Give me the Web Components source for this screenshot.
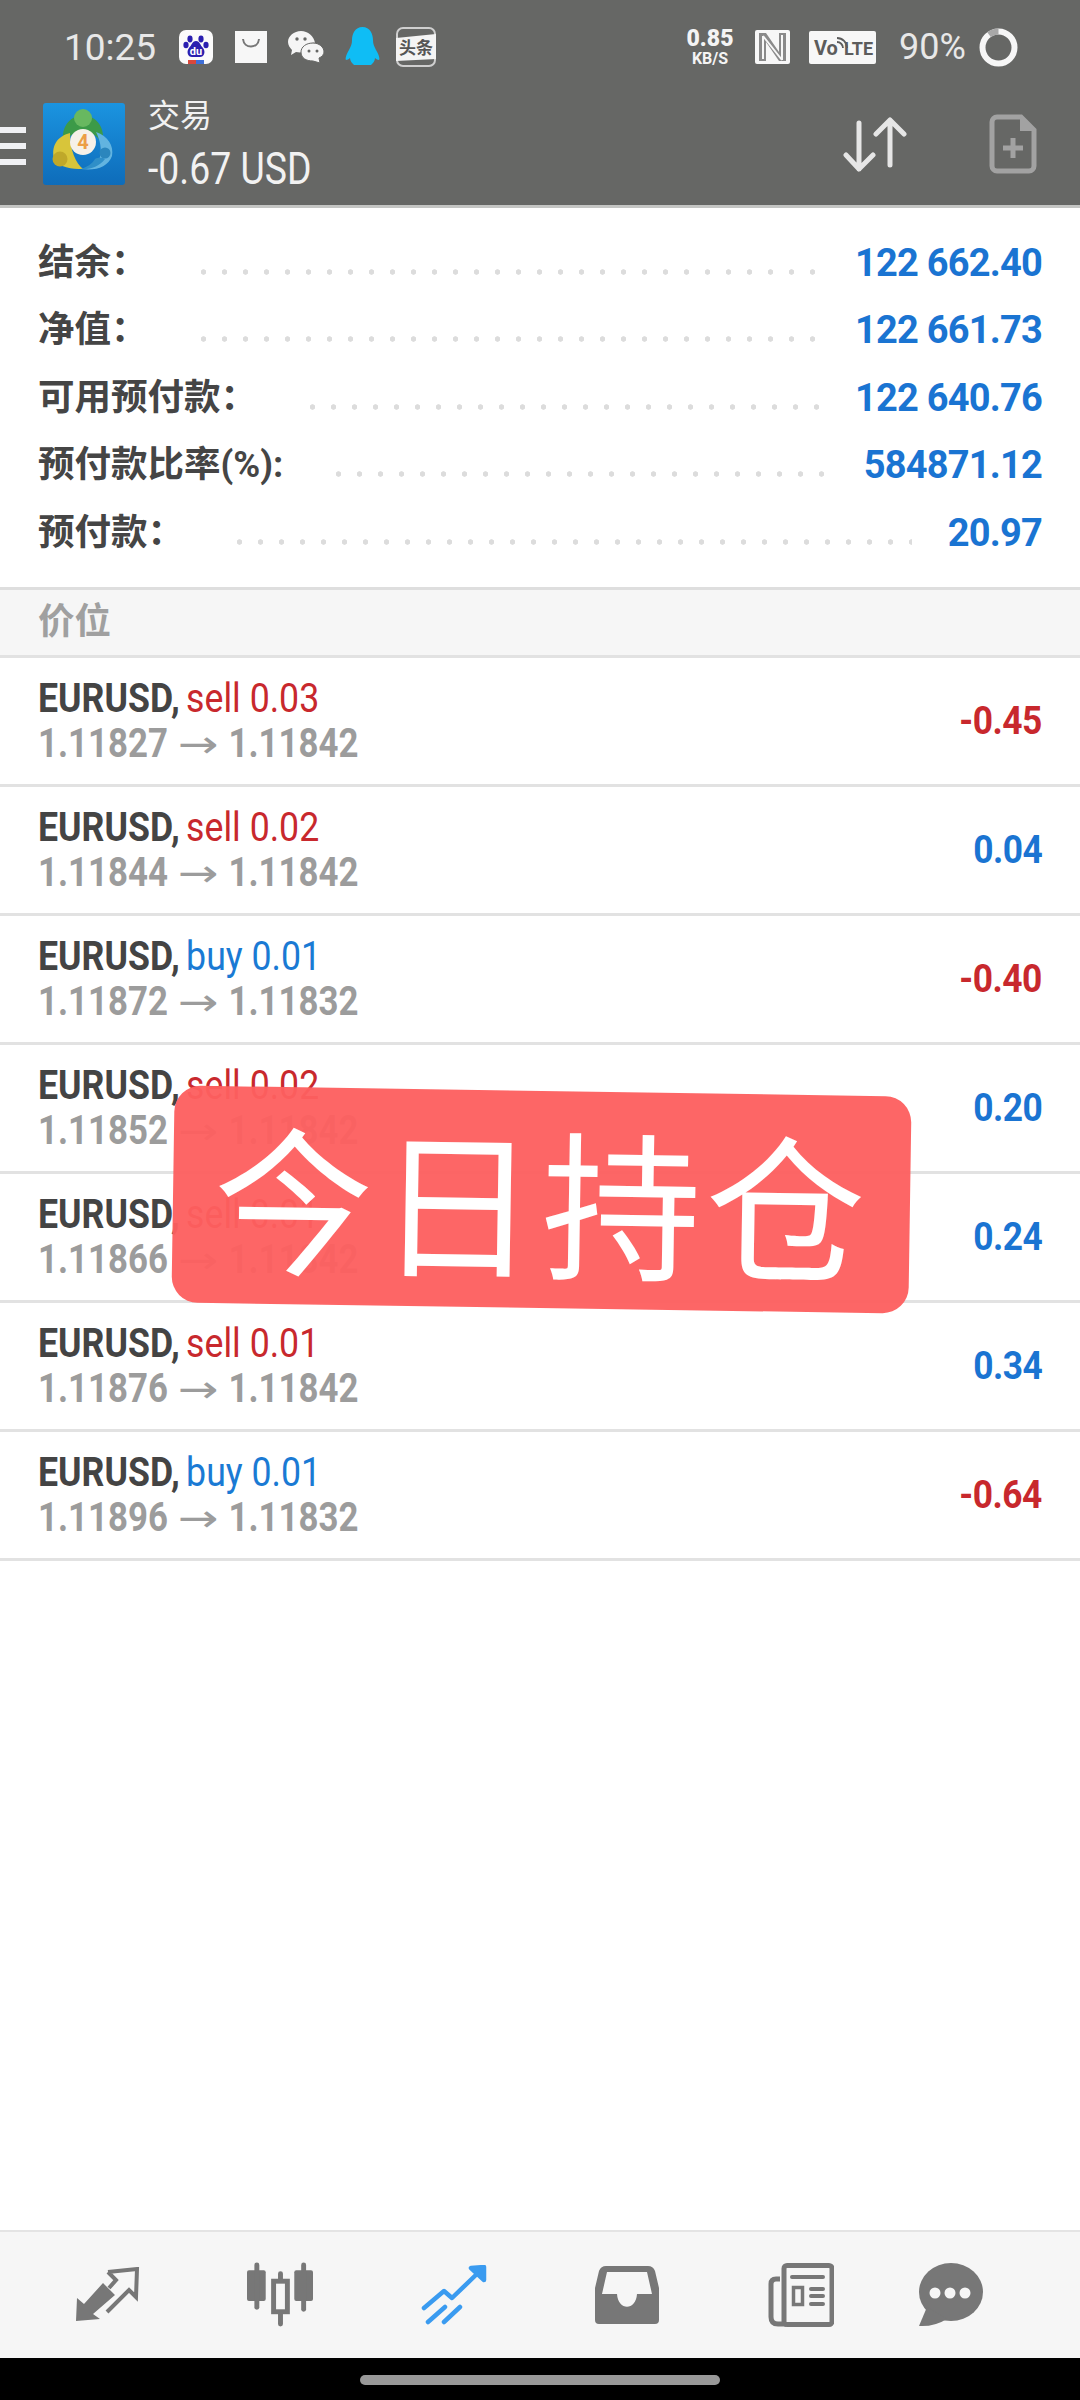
<!DOCTYPE html>
<html lang="zh">
<head>
<meta charset="utf-8">
<title>MT4 交易</title>
<style>
  html, body { margin: 0; background: #fff; }
  body { font-family: Roboto, "Noto Sans CJK SC", sans-serif; }
</style>
</head>
<body>
<mt-app>
  <mt-header slot="top"></mt-header>
  <mt-summary-row label="结余：" value="122 662.40"></mt-summary-row>
  <mt-summary-row label="净值：" value="122 661.73"></mt-summary-row>
  <mt-summary-row label="可用预付款：" value="122 640.76"></mt-summary-row>
  <mt-summary-row label="预付款比率(%):" value="584871.12"></mt-summary-row>
  <mt-summary-row label="预付款：" value="20.97"></mt-summary-row>
  <mt-section-bar slot="list">价位</mt-section-bar>
  <mt-position slot="list" side="sell" lots="0.03" open="1.11827" close="1.11842" profit="-0.45"></mt-position>
  <mt-position slot="list" side="sell" lots="0.02" open="1.11844" close="1.11842" profit="0.04"></mt-position>
  <mt-position slot="list" side="buy" lots="0.01" open="1.11872" close="1.11832" profit="-0.40"></mt-position>
  <mt-position slot="list" side="sell" lots="0.02" open="1.11852" close="1.11842" profit="0.20"></mt-position>
  <mt-position slot="list" side="sell" lots="0.01" open="1.11866" close="1.11842" profit="0.24"></mt-position>
  <mt-position slot="list" side="sell" lots="0.01" open="1.11876" close="1.11842" profit="0.34"></mt-position>
  <mt-position slot="list" side="buy" lots="0.01" open="1.11896" close="1.11832" profit="-0.64"></mt-position>
  <mt-tabbar slot="bottom"></mt-tabbar>
  <mt-stamp slot="over">今日持仓</mt-stamp>
</mt-app>

<script>
class MtApp extends HTMLElement {
  constructor() {
    super();
    this.attachShadow({ mode: 'open' });
    this.shadowRoot.innerHTML = `
      <style>
        :host { display: flex; flex-direction: column; height: 2400px; position: relative; overflow: hidden; }
        .summary { padding: 20px 0 21.5px; }
        .list { flex: 1; }
      </style>
      <slot name="top"></slot>
      <div class="summary"><slot></slot></div>
      <div class="list"><slot name="list"></slot></div>
      <slot name="bottom"></slot>
      <slot name="over"></slot>
    `;
  }
}

class MtHeader extends HTMLElement {
  constructor() {
    super();
    this.attachShadow({ mode: 'open' });
    this.shadowRoot.innerHTML = `
      <style>
        :host { display: block; background: #666765; color: #f2f2f2; border-bottom: 3px solid #c4c5c3; font-family: Roboto, "Noto Sans CJK SC", sans-serif; }
        .status { height: 94px; display: flex; justify-content: space-between; align-items: center; padding: 0 62px 0 64px; }
        .left, .right { display: flex; align-items: center; }
        .time { font-size: 37px; font-weight: 400; width: 115px; color: #e8e8e8; }
        .net { width: 50px; margin-right: 20px; display: flex; flex-direction: column; align-items: center; font-weight: 700; color: #f4f4f4; }
        .net b { font-size: 23px; line-height: 22px; }
        .net i { font-style: normal; font-size: 16px; line-height: 17px; }
        .pct { font-size: 36px; font-weight: 400; margin: 0 10px 0 23px; width: 70px; color: #e8e8e8; white-space: nowrap; }
        svg { display: block; flex: none; }
        .bar { height: 111px; display: flex; align-items: center; }
        .burger { width: 26px; height: 38px; margin-top: -7px; display: flex; flex-direction: column; justify-content: space-between; }
        .burger span { height: 6px; background: #f0f1f4; }
        .logo { margin: -11px 0 0 17px; }
        .titles { margin-left: 23px; flex: 1; margin-top: -7px; }
        .sub { font-size: 32px; line-height: 46px; }
        .pl { font-size: 44px; line-height: 60px; width: 220px; transform: scaleX(.85); transform-origin: left; white-space: nowrap; }
        .arrows { margin: -9px 80px 0 0; }
        .doc { margin: -11px 43px 0 0; }
      </style>
      <div class="status">
        <div class="left">
          <span class="time">10:25</span>
          <svg width="34" height="34" viewBox="0 0 34 34">
            <rect width="34" height="34" rx="7" fill="#fbfbfb"/>
            <rect x="9" y="30" width="8" height="4" fill="#d9483b"/><rect x="17" y="30" width="8" height="4" fill="#3f6fd8"/>
            <ellipse cx="11" cy="9" rx="2.6" ry="3.4" fill="#2a1fb0"/><ellipse cx="22" cy="9" rx="2.6" ry="3.4" fill="#2a1fb0"/>
            <ellipse cx="7" cy="15" rx="2.6" ry="3.2" fill="#2a1fb0"/><ellipse cx="27" cy="15" rx="2.6" ry="3.2" fill="#2a1fb0"/>
            <path d="M17 11c4 0 4 4 7 7 3 4 1 9-3 9h-8c-4 0-6-5-3-9 3-3 3-7 7-7z" fill="#2a1fb0"/>
            <text x="17" y="25" text-anchor="middle" font-size="11" font-weight="700" fill="#fff" font-family="Roboto, sans-serif">du</text>
          </svg>
          <svg style="margin-left:22px" width="32" height="32" viewBox="0 0 32 32">
            <rect width="32" height="32" fill="#f7f7f7"/>
            <path d="M8 8c1 10 15 10 16 0" fill="none" stroke="#777" stroke-width="2"/>
          </svg>
          <svg style="margin-left:21px" width="37" height="32" viewBox="0 0 37 32">
            <path d="M13 0C6 0 0 5 0 11c0 3 2 6 4 8l-1 5 5-3c2 0 4 1 6 0 3-7 9-10 13-9C26 5 20 0 13 0z" fill="#f5f5f5"/>
            <path d="M25 12c-7 0-12 4-12 9 0 6 5 9 12 9l7 2-1-5c3-1 5-4 5-6 0-5-5-9-11-9z" fill="#f5f5f5" stroke="#666765" stroke-width="1"/>
            <circle cx="9" cy="8" r="1.7" fill="#666765"/><circle cx="17" cy="8" r="1.7" fill="#666765"/>
            <circle cx="21" cy="20" r="1.5" fill="#666765"/><circle cx="29" cy="20" r="1.5" fill="#666765"/>
          </svg>
          <svg style="margin-left:20px" width="35" height="40" viewBox="0 0 35 40">
            <path d="M17.5 0C25 0 28 7 28 13c0 4 1 6 3 10 3 5 4 9 3 10-1 0-3-1-4-2 0 3-2 5-4 7H9c-2-2-4-4-4-7-1 1-3 2-4 2-1-1 0-5 3-10 2-4 3-6 3-10C7 7 10 0 17.5 0z" fill="#0fbdf5"/>
          </svg>
          <svg style="margin-left:16px" width="40" height="40" viewBox="0 0 40 40">
            <rect x="1" y="1" width="38" height="38" rx="6" fill="none" stroke="#cfcfcf" stroke-width="2"/>
            <path d="M0 11L40 7V32L0 34Z" fill="#f4f4f4"/>
            <text x="20" y="27" text-anchor="middle" font-size="17" font-weight="700" fill="#555" font-family="'Noto Sans CJK SC', sans-serif">头条</text>
          </svg>
        </div>
        <div class="right">
          <div class="net"><b>0.85</b><i>KB/S</i></div>
          <svg width="35" height="34" viewBox="0 0 35 34">
            <rect width="35" height="34" rx="2" fill="#f7f7f7"/>
            <path d="M4 3H11L24 22V3H31V31H24L11 12V31H4Z" fill="#8a8a8a"/>
            <path d="M8 6L27 30M8 6V29M27 5V30" fill="none" stroke="#f7f7f7" stroke-width="2"/>
          </svg>
          <svg style="margin-left:19px" width="67" height="33" viewBox="0 0 67 33">
            <rect width="67" height="33" rx="2" fill="#f7f7f7"/>
            <text x="5" y="24" font-size="20" font-weight="700" fill="#5c5c5c" font-family="Roboto, sans-serif">Vo</text>
            <path d="M28 11a6 6 0 0 1 6 6M28 7a10 10 0 0 1 10 10" fill="none" stroke="#5c5c5c" stroke-width="1.8"/>
            <text x="35" y="24" font-size="18" font-weight="700" fill="#5c5c5c" font-family="Roboto, sans-serif">LTE</text>
          </svg>
          <span class="pct">90%</span>
          <svg width="39" height="39" viewBox="0 0 39 39">
            <circle cx="19.5" cy="19.5" r="16" fill="none" stroke="#f6f6f6" stroke-width="6"/>
            <path d="M19.500 3.500A16 16 0 0 0 10 6.600" fill="none" stroke="#a8a8a8" stroke-width="6"/>
          </svg>
        </div>
      </div>
      <div class="bar">
        <div class="burger"><span></span><span></span><span></span></div>
        <svg class="logo" width="82" height="82" viewBox="0 0 82 82">
          <defs><linearGradient id="lg" x1="0" y1="0" x2="0" y2="1"><stop offset="0" stop-color="#1b94e0"/><stop offset="1" stop-color="#0e6cba"/></linearGradient></defs>
          <rect width="82" height="82" rx="3" fill="url(#lg)"/>
          <path d="M21 42C16 22 30 12 40 12s24 10 19 30c-3-9-10-13-19-13s-16 4-19 13z" fill="#3c9a48"/>
          <circle cx="40" cy="15" r="9" fill="#68b860"/>
          <path d="M27 30C14 33 8 44 11 55c5 10 18 11 29 11-7-6-13-18-13-36z" fill="#d8c53a"/>
          <circle cx="17" cy="56" r="7.500" fill="#bfa82a"/>
          <path d="M53 29c12 4 18 14 16 24-4 11-16 15-31 13 10-1 17-5 19-12 2-8 0-17-4-25z" fill="#62b4e0"/>
          <path d="M38 66c8 1 18-2 24-10-2-1-6-2-10 0-3 5-8 8-14 10z" fill="#2f8fc8"/>
          <circle cx="62" cy="50" r="5.500" fill="#2b86bd"/>
          <circle cx="40" cy="39" r="13" fill="#f6f1e8"/>
          <text x="40" y="46" text-anchor="middle" font-size="20" font-weight="700" fill="#ec9f45" font-family="Roboto, sans-serif">4</text>
        </svg>
        <div class="titles">
          <div class="sub">交易</div>
          <div class="pl">-0.67 USD</div>
        </div>
        <svg class="arrows" width="66" height="56" viewBox="0 0 66 56" fill="none" stroke="#e6e6e6" stroke-width="5" stroke-linecap="round" stroke-linejoin="round">
          <path d="M16 6V52M3 38L16 52L30 38"/>
          <path d="M47 48V3M33 17L47 3L61 17"/>
        </svg>
        <svg class="doc" width="48" height="60" viewBox="0 0 48 60">
          <path d="M3 8a5 5 0 0 1 5-5H32L45 16V52a5 5 0 0 1-5 5H8a5 5 0 0 1-5-5z" fill="none" stroke="#a2a2a2" stroke-width="5"/>
          <path d="M31 2L46 17H31z" fill="#a2a2a2"/>
          <path d="M24 24V44M14 34H34" stroke="#a2a2a2" stroke-width="5"/>
        </svg>
      </div>
    `;
  }
}

class MtSummaryRow extends HTMLElement {
  constructor() {
    super();
    this.attachShadow({ mode: 'open' });
    this.shadowRoot.innerHTML = `
      <style>
        :host { display: flex; align-items: center; height: 67.5px; padding: 0 38px; font-family: Roboto, "Noto Sans CJK SC", sans-serif; }
        .label { font-family: Roboto, "Noto Sans CJK SC", sans-serif; font-size: 36.5px; font-weight: 700; color: #454545; white-space: nowrap; margin-top: -5px; }
        .dots { flex: 1; height: 8px; margin: 20px 36px 0 45px; background: radial-gradient(circle, #dcdcdc 2.4px, transparent 3px) 0 0 / 21px 8px repeat-x; }
        .value { font-size: 38px; font-weight: 700; color: #1a74d2; letter-spacing: -.8px; white-space: nowrap; margin-top: 2px; }
      </style>
      <span class="label">${this.getAttribute('label')}</span>
      <span class="dots"></span>
      <span class="value">${this.getAttribute('value')}</span>
    `;
  }
}

class MtSectionBar extends HTMLElement {
  constructor() {
    super();
    this.attachShadow({ mode: 'open' });
    this.shadowRoot.innerHTML = `
      <style>
        :host { display: flex; align-items: center; height: 56px; padding: 0 38px 9px; background: #f6f6f6; border-top: 3px solid #dedede; border-bottom: 3px solid #e2e2e2;
          font-family: "Noto Sans CJK SC", sans-serif; font-size: 36.5px; font-weight: 700; color: #a0a0a0; }
      </style>
      <slot></slot>
    `;
  }
}

class MtPosition extends HTMLElement {
  constructor() {
    super();
    this.attachShadow({ mode: 'open' });
    const side = this.getAttribute('side');
    const profit = this.getAttribute('profit');
    this.shadowRoot.innerHTML = `
      <style>
        :host { display: flex; align-items: center; justify-content: space-between; height: 126px; padding: 0 38px; border-bottom: 3px solid #e2e2e2; font-family: Roboto, sans-serif; }
        .text { width: 420px; white-space: nowrap; }
        .title { font-size: 41px; line-height: 45px; color: #444; font-weight: 700; transform: scaleX(.87); transform-origin: left; }
        .title b { font-weight: 400; margin-left: -3px; }
        .sell { color: #c8282d; }
        .buy { color: #1a7ad4; }
        .sub { font-size: 40px; line-height: 45px; color: #9c9c9c; font-weight: 700; transform: scaleX(.87); transform-origin: left; }
        .sub i { display: inline-block; font: 400 38px/38px "DejaVu Sans", sans-serif; margin: 0 9px; transform: scaleX(1.47); }
        .profit { font-size: 38px; font-weight: 700; letter-spacing: -.5px; transform: scaleX(.93); transform-origin: right; }
        .neg { color: #c8282d; }
        .pos { color: #1a74d2; }
      </style>
      <div class="text">
        <div class="title">EURUSD, <b class="${side}">${side} ${this.getAttribute('lots')}</b></div>
        <div class="sub">${this.getAttribute('open')} <i>→</i> ${this.getAttribute('close')}</div>
      </div>
      <div class="profit ${profit[0] === '-' ? 'neg' : 'pos'}">${profit}</div>
    `;
  }
}

class MtTabbar extends HTMLElement {
  constructor() {
    super();
    this.attachShadow({ mode: 'open' });
    this.shadowRoot.innerHTML = `
      <style>
        :host { display: block; }
        nav { height: 126px; background: #f6f6f6; border-top: 2px solid #e4e4e4; display: flex; align-items: center; padding-left: 75px; }
        svg { display: block; flex: none; width: 66px; }
        footer { height: 42px; background: #000; display: flex; justify-content: center; align-items: flex-start; }
        footer span { width: 360px; height: 10px; margin-top: 17px; border-radius: 5px; background: #999; }
      </style>
      <nav>
        <svg height="56" viewBox="0 0 64 56">
          <path d="M0 54L1 31L8 37L27 16L39 28L17 47L24 52Z" fill="#777"/>
          <path d="M32 5L61 2L60 30L53 23L31 45M32 5L40 13L33 21" fill="none" stroke="#777" stroke-width="4"/>
        </svg>
        <svg style="margin-left:106px" height="66" viewBox="0 0 67 66" fill="#777">
          <rect x="0" y="8" width="19" height="31" rx="2"/><rect x="7.500" y="0" width="5" height="48" rx="2.500"/>
          <rect x="48" y="8" width="19" height="31" rx="2"/><rect x="55" y="0" width="5" height="50" rx="2.500"/>
          <rect x="31.500" y="9" width="5" height="56" rx="2.500"/>
          <rect x="27" y="19" width="14" height="31" fill="#f6f6f6" stroke="#777" stroke-width="5"/>
        </svg>
        <svg style="margin-left:108px" height="60" viewBox="0 0 64 60" fill="none" stroke="#3a9bf0" stroke-width="4.500" stroke-linecap="round" stroke-linejoin="round">
          <path d="M2 43L22 26L30 33L58 6"/>
          <path d="M49 3L62 2L62 15Z" fill="#3a9bf0"/>
          <path d="M6 57L23 42M22 57L38 42"/>
        </svg>
        <svg style="margin-left:107px" height="58" viewBox="0 0 64 58">
          <path fill-rule="evenodd" fill="#777" d="M11 0H53Q58 0 60 5L64 22V54Q64 58 60 58H4Q0 58 0 54V22L4 5Q6 0 11 0ZM12 6L7 28H22C23 45 41 45 42 28H57L52 6Z"/>
        </svg>
        <svg style="margin-left:108px" height="64" viewBox="0 0 66 64" fill="none" stroke="#777">
          <rect x="16" y="2.500" width="48" height="59" rx="3" stroke-width="5"/>
          <path d="M12 16H8Q3 16 3 21V54Q3 61 10 61H18" stroke-width="5"/>
          <path d="M24 14H55M43 26H55M43 33H55M43 41H55" stroke-width="4" stroke-linecap="round"/>
          <rect x="25.500" y="24.500" width="9" height="17" stroke-width="3.500"/>
        </svg>
        <svg style="margin-left:84px" height="64" viewBox="0 0 64 64" fill="#777">
          <ellipse cx="32" cy="29" rx="32" ry="29"/>
          <path d="M8 44L0 63Q15 64 28 56Z"/>
          <circle cx="16" cy="30" r="5.500" fill="#f6f6f6"/><circle cx="31" cy="30" r="5.500" fill="#f6f6f6"/><circle cx="46" cy="30" r="5.500" fill="#f6f6f6"/>
        </svg>
      </nav>
      <footer><span></span></footer>
    `;
  }
}

class MtStamp extends HTMLElement {
  constructor() {
    super();
    this.attachShadow({ mode: 'open' });
    this.shadowRoot.innerHTML = `
      <style>
        :host { position: absolute; left: 173px; top: 1091px; width: 737px; height: 211px; padding-bottom: 6px; display: flex; align-items: center; justify-content: center;
          background: rgba(253, 96, 96, .96); border-radius: 26px; transform: rotate(.87deg);
          font-family: "Noto Sans CJK SC", sans-serif; font-size: 160px; color: #fff; letter-spacing: 4px; white-space: nowrap; }
      </style>
      <slot></slot>
    `;
  }
}

customElements.define('mt-app', MtApp);
customElements.define('mt-header', MtHeader);
customElements.define('mt-summary-row', MtSummaryRow);
customElements.define('mt-section-bar', MtSectionBar);
customElements.define('mt-position', MtPosition);
customElements.define('mt-tabbar', MtTabbar);
customElements.define('mt-stamp', MtStamp);
</script>
</body>
</html>
